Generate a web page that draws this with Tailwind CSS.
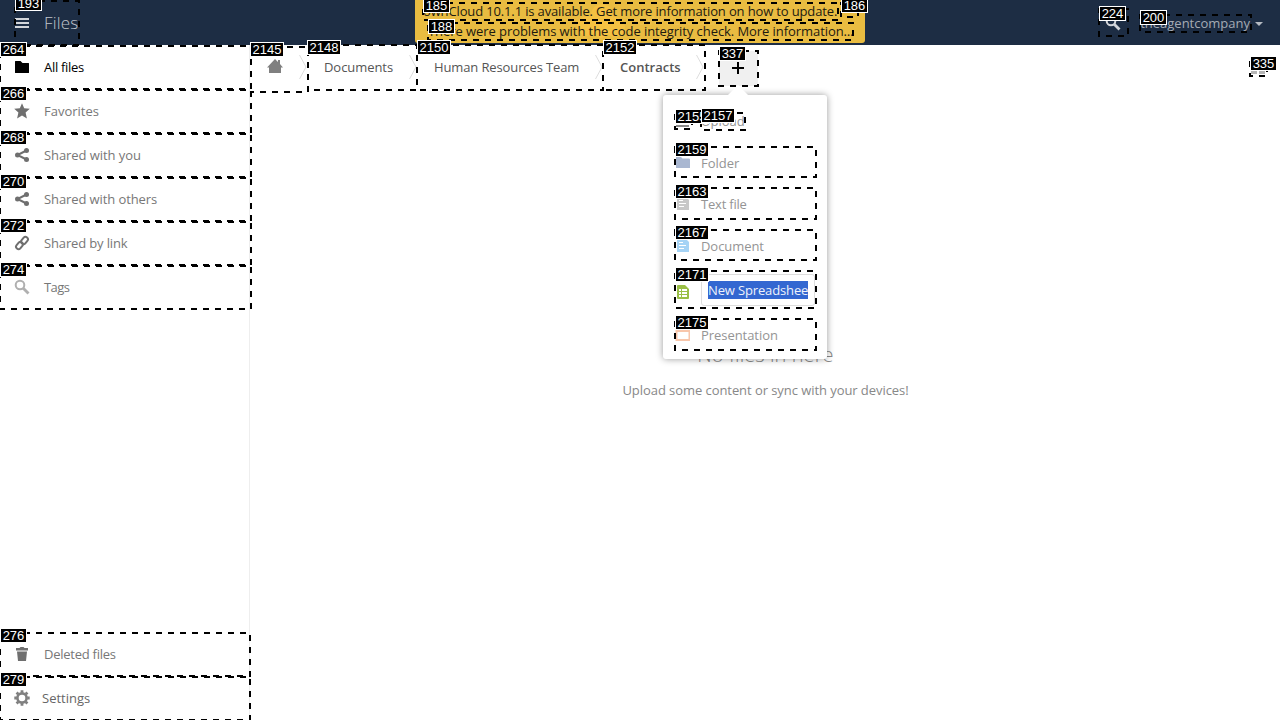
<!DOCTYPE html>
<html lang="en">
<head>
<meta charset="utf-8">
<title>Files - ownCloud</title>
<script src="https://cdn.jsdelivr.net/npm/@tailwindcss/browser@4"></script>
</head>
<body class="relative flex h-[720px] w-[1280px] flex-col overflow-hidden bg-white font-['Open_Sans',sans-serif] text-[13px] leading-[20px] text-[#555]">

<header class="flex h-[45px] shrink-0 items-center bg-[#1d2d44] text-white">
  <svg class="ml-[15px] h-[14px] w-[14px]" viewBox="0 0 14 14" fill="#d2d5da"><path d="M0 2h14v2H0zM0 6h14v2H0zM0 10h14v2H0z"/></svg>
  <span class="ml-[15px] text-[17px] font-light tracking-[.15px] text-[#c0c5cc]">Files</span>
  <svg class="ml-auto mr-[19px] h-[16px] w-[16px]" viewBox="0 0 16 16" fill="none" stroke="#d2d5da" stroke-width="2"><circle cx="6" cy="6" r="4.300"/><path d="M9 9l5.500 5.500" stroke-width="2.800"/></svg>
  <span class="text-[#a5abb4]">theagentcompany</span>
  <svg class="ml-[5px] mr-[17px] mt-[2px] h-[4px] w-[8px]" viewBox="0 0 8 4" fill="#b5bac1"><path d="M0 0h8L4 4z"/></svg>
</header>

<div class="flex min-h-0 flex-1">
  <nav class="flex w-[250px] shrink-0 flex-col border-r border-[#eee] text-[#777]">
    <a class="flex h-11 items-center gap-[14px] pl-[14px] tracking-[-.3px] text-black"><svg class="h-4 w-4" viewBox="0 0 16 16"><path d="M1.500 2h5l2 2H14.500q.5 0 .5.500v9q0 .5-.5.500h-13q-.5 0-.5-.5v-11q0-.5.5-.5z"/></svg>All files</a>
    <a class="flex h-11 items-center gap-[14px] pl-[14px]"><svg class="h-4 w-4" viewBox="0 0 16 16" fill="#6f6f6f"><path d="M8 .2l2.200 5 5.600.6-4.200 3.700 1.300 5.900L8 12.500l-4.900 2.900 1.300-5.900L.2 5.800l5.600-.6z"/></svg>Favorites</a>
    <a class="flex h-11 items-center gap-[14px] pl-[14px] tracking-[-.07px]"><svg class="h-4 w-4" viewBox="0 0 16 16" fill="#6f6f6f"><path d="M12.500 3.500L3.500 8l9 4.500" fill="none" stroke="#6f6f6f" stroke-width="2"/><circle cx="12.500" cy="3.500" r="2.500"/><circle cx="3.500" cy="8" r="2.500"/><circle cx="12.500" cy="12.500" r="2.500"/></svg>Shared with you</a>
    <a class="flex h-11 items-center gap-[14px] pl-[14px] tracking-[-.1px]"><svg class="h-4 w-4" viewBox="0 0 16 16" fill="#6f6f6f"><path d="M12.500 3.500L3.500 8l9 4.500" fill="none" stroke="#6f6f6f" stroke-width="2"/><circle cx="12.500" cy="3.500" r="2.500"/><circle cx="3.500" cy="8" r="2.500"/><circle cx="12.500" cy="12.500" r="2.500"/></svg>Shared with others</a>
    <a class="flex h-11 items-center gap-[14px] pl-[14px] tracking-[-.14px]"><svg class="h-4 w-4" viewBox="0 0 16 16" fill="none" stroke="#6f6f6f" stroke-width="2"><rect x="-4" y="-2.400" width="8" height="4.800" rx="2.400" transform="translate(10.500 5.500) rotate(-50)"/><rect x="-4" y="-2.400" width="8" height="4.800" rx="2.400" transform="translate(5.500 10.500) rotate(-50)"/></svg>Shared by link</a>
    <a class="flex h-11 items-center gap-[14px] pl-[14px] tracking-[-.6px]"><svg class="h-4 w-4" viewBox="0 0 16 16" fill="none" stroke="#b0b0b0" stroke-width="2"><circle cx="6" cy="6" r="4.300"/><path d="M9 9l5.500 5.500" stroke-width="2.800"/></svg>Tags</a>
    <a class="mt-auto flex h-11 items-center gap-[14px] pl-[14px] tracking-[-.25px]"><svg class="h-4 w-4" viewBox="0 0 16 16" fill="#6f6f6f"><path d="M6.500 1h3l1 1H14v2.500H2V2h3.500zM3 5.500h10l-1 9.500H4z"/></svg>Deleted files</a>
    <a class="flex h-11 items-center gap-[12px] pl-[14px] text-[#666]"><svg class="h-4 w-4" viewBox="0 0 16 16" fill="none" stroke="#808080"><circle cx="8" cy="8" r="4.600" stroke-width="2.600"/><path stroke-width="2.800" d="M8 .3v2.500M8 13.200v2.500M.3 8h2.500M13.200 8h2.500M2.600 2.600l1.700 1.700M11.700 11.700l1.700 1.700M13.400 2.600l-1.700 1.700M4.300 11.700l-1.700 1.700"/></svg>Settings</a>
  </nav>

  <main class="flex min-w-0 flex-1 flex-col">
    <div class="flex h-11 shrink-0 items-center">
      <svg class="ml-[17px] h-4 w-4" viewBox="0 0 16 16" fill="#808080"><path d="M8 0l3 3V1h2v4l3 3.500h-2V14H2V8.500H0z"/></svg>
      <svg class="ml-[16px] h-6 w-[8px]" viewBox="0 0 8 24" fill="none" stroke="#ddd"><path d="M.5 0l6.500 12-6.500 12"/></svg>
      <span class="ml-[17px] w-[69px] whitespace-nowrap tracking-[-.06px]">Documents</span>
      <svg class="ml-[16px] h-6 w-[8px]" viewBox="0 0 8 24" fill="none" stroke="#ddd"><path d="M.5 0l6.500 12-6.500 12"/></svg>
      <span class="ml-[17px] w-[145px] whitespace-nowrap tracking-[-.12px]">Human Resources Team</span>
      <svg class="ml-[16px] h-6 w-[8px]" viewBox="0 0 8 24" fill="none" stroke="#ddd"><path d="M.5 0l6.500 12-6.500 12"/></svg>
      <span class="ml-[17px] w-[60px] whitespace-nowrap font-semibold">Contracts</span>
      <svg class="ml-[16px] h-6 w-[8px]" viewBox="0 0 8 24" fill="none" stroke="#ddd"><path d="M.5 0l6.500 12-6.500 12"/></svg>
      <div class="ml-[15px] mt-[3px] flex h-[35px] w-[39px] items-center justify-center bg-[#f0f0f0] pb-[2px] pr-[1px]"><svg class="h-3 w-3" viewBox="0 0 12 12" stroke="#000" stroke-width="2"><path d="M6 0v12M0 6h12"/></svg></div>
      <svg class="ml-auto mr-[14px] mt-[4px] h-[14px] w-[16px]" viewBox="0 0 16 14" fill="#b5b5b5"><path d="M1 0h6v4H1zM9 0h6v4H9zM1 8h6v4H1zM9 8h6v4H9z"/></svg>
    </div>
    <div class="mt-[254px] flex flex-col items-center pl-px text-[#888]">
      <h2 class="text-[20px] font-light leading-[24px] tracking-[.08px]">No files in here</h2>
      <p class="mt-[13px] tracking-[-.065px]">Upload some content or sync with your devices!</p>
    </div>
  </main>
</div>

<div class="absolute left-[415px] top-0 flex h-[43px] w-[450px] flex-col overflow-hidden rounded-b-[3px] bg-[#e9bc41] pt-px text-[#1d1a10]">
  <svg class="absolute left-[160px] top-[4px] h-[36px] w-[54px]" viewBox="0 0 54 36" fill="#fbc343" fill-opacity=".65"><circle cx="27" cy="11" r="11"/><circle cx="12" cy="22" r="10"/><circle cx="40" cy="23" r="10"/><circle cx="26" cy="25" r="9"/></svg>
  <span class="absolute left-[222px] top-[9px] text-[16px] tracking-[.5px] text-[#edc14d]">ownCloud</span>
  <span class="relative ml-[8px] h-5 whitespace-nowrap tracking-[-.14px]">ownCloud 10.1.1 is available. Get more information on how to update.</span>
  <span class="relative ml-[13px] h-5 whitespace-nowrap tracking-[-.07px]">There were problems with the code integrity check. More information…</span>
</div>

<div class="absolute left-[663px] top-[95px] h-[264px] w-[164px] rounded-[3px] bg-white pl-[12px] text-[#949494] shadow-[0_0_7px_rgba(0,0,0,.4)]">
  <svg class="absolute left-[65px] top-[-10px] h-[10px] w-[20px]" viewBox="0 0 20 10" fill="#fff"><path d="M0 10L10 0l10 10z"/></svg>
  <div class="flex h-[47px] items-center gap-[11px] pt-[5px]"><svg class="h-[15px] w-[15px]" viewBox="0 0 15 15" fill="#888"><path d="M7.500 0l5 6h-3v4h-4V6h-3zM1 11h13v2H1z"/></svg>Upload</div>
  <div class="flex h-[41px] items-center gap-[11px]"><svg class="h-[15px] w-[15px]" viewBox="0 0 15 15" fill="#a9b7d1"><path d="M1 2h5l1.500 1.500H14q1 0 1 1V13H1z"/></svg>Folder</div>
  <div class="flex h-[41px] items-center gap-[11px] tracking-[-.2px]"><svg class="h-[15px] w-[15px]" viewBox="0 0 15 15"><path d="M2 1h9l3 3v10H2z" fill="#c8c8c8"/><path d="M4 4.500h4M4 7.500h7M4 10.500h5" stroke="#fff"/></svg>Text file</div>
  <div class="flex h-[43px] items-center gap-[11px] tracking-[-.06px]"><svg class="h-[15px] w-[15px]" viewBox="0 0 15 15"><path d="M2 1h9l3 3v10H2z" fill="#a5d3f5"/><path d="M4 4.500h4M4 7.500h7M4 10.500h5" stroke="#fff"/></svg>Document</div>
  <div class="flex h-[45px] items-center gap-[11px]"><svg class="mt-[5px] h-[15px] w-[15px] shrink-0" viewBox="0 0 15 15"><path d="M2 1q0-1 1-1h7l4 4v9q0 1-1 1H3q-1 0-1-1z" fill="#9abf46"/><path d="M4 4h8v8H4z" fill="#fff"/><path d="M4 6.500h8M4 9.500h8M6.500 4v8" stroke="#9abf46"/></svg><div class="flex h-[32px] w-[114px] items-center rounded-[3px] border border-[#ddd] pl-[6px] pt-px"><span class="h-[18px] w-[100px] overflow-hidden whitespace-nowrap bg-[#3367d1] leading-[18px] tracking-[-.14px] text-[#eef2fb]">New Spreadshee</span></div></div>
  <div class="flex h-[46px] items-center gap-[11px] tracking-[-.05px]"><svg class="h-[15px] w-[15px]" viewBox="0 0 15 15"><path d="M1.500 3h13v9h-13z" fill="none" stroke="#f8c6ab" stroke-width="2"/></svg>Presentation</div>
</div>

<!-- numbered element outlines -->
<svg class="absolute left-0 top-0 h-[720px] w-[1280px]" viewBox="0 0 1280 720" fill="none" stroke="#000" stroke-width="2" stroke-dasharray="6 6">
  <rect x="15" y="1" width="64" height="44"/>
  <rect x="0" y="46" width="251" height="43"/>
  <rect x="0" y="90" width="251" height="43"/>
  <rect x="0" y="134" width="251" height="43"/>
  <rect x="0" y="178" width="251" height="43"/>
  <rect x="0" y="222" width="251" height="43"/>
  <rect x="0" y="266" width="251" height="43"/>
  <rect x="0" y="633" width="250" height="43"/>
  <rect x="0" y="677" width="250" height="43"/>
  <rect x="423" y="3" width="415" height="17"/>
  <rect x="841" y="3" width="17" height="14"/>
  <rect x="428" y="23" width="425" height="17"/>
  <path d="M251 47h57v45h-57"/>
  <path d="M307 45h110v45H307"/>
  <path d="M417 45h186v45H417"/>
  <path d="M603 45h102v45H603"/>
  <rect x="719" y="51" width="39" height="35"/>
  <rect x="1099" y="9" width="29" height="27"/>
  <rect x="1140" y="15" width="111" height="17"/>
  <rect x="1250" y="59" width="17" height="17"/>
  <rect x="675" y="112" width="17" height="17"/>
  <rect x="701" y="113" width="44" height="17"/>
  <rect x="675" y="147" width="141" height="30"/>
  <rect x="675" y="188" width="141" height="31"/>
  <rect x="675" y="230" width="141" height="30"/>
  <rect x="675" y="271" width="141" height="37"/>
  <rect x="675" y="319" width="141" height="31"/>
</svg>

<!-- outline labels -->
<div class="font-['Liberation_Sans',sans-serif] text-[13px] leading-[13px] text-white">
  <b class="absolute left-[15px] top-[-4px] h-[15px] w-[27px] border border-white bg-black text-center font-normal">193</b>
  <b class="absolute left-0 top-[42px] h-[15px] w-[27px] border border-white bg-black text-center font-normal">264</b>
  <b class="absolute left-0 top-[86px] h-[15px] w-[27px] border border-white bg-black text-center font-normal">266</b>
  <b class="absolute left-0 top-[130px] h-[15px] w-[27px] border border-white bg-black text-center font-normal">268</b>
  <b class="absolute left-0 top-[174px] h-[15px] w-[27px] border border-white bg-black text-center font-normal">270</b>
  <b class="absolute left-0 top-[218px] h-[15px] w-[27px] border border-white bg-black text-center font-normal">272</b>
  <b class="absolute left-0 top-[262px] h-[15px] w-[27px] border border-white bg-black text-center font-normal">274</b>
  <b class="absolute left-0 top-[628px] h-[15px] w-[27px] border border-white bg-black text-center font-normal">276</b>
  <b class="absolute left-0 top-[672px] h-[15px] w-[27px] border border-white bg-black text-center font-normal">279</b>
  <b class="absolute left-[423px] top-[-2px] h-[15px] w-[27px] border border-white bg-black text-center font-normal">185</b>
  <b class="absolute left-[841px] top-[-2px] h-[15px] w-[27px] border border-white bg-black text-center font-normal">186</b>
  <b class="absolute left-[428px] top-[19px] h-[15px] w-[27px] border border-white bg-black text-center font-normal">188</b>
  <b class="absolute left-[250px] top-[42px] h-[15px] w-[34px] border border-white bg-black text-center font-normal">2145</b>
  <b class="absolute left-[307px] top-[40px] h-[15px] w-[34px] border border-white bg-black text-center font-normal">2148</b>
  <b class="absolute left-[417px] top-[40px] h-[15px] w-[34px] border border-white bg-black text-center font-normal">2150</b>
  <b class="absolute left-[603px] top-[40px] h-[15px] w-[34px] border border-white bg-black text-center font-normal">2152</b>
  <b class="absolute left-[719px] top-[46px] h-[15px] w-[27px] border border-white bg-black text-center font-normal">337</b>
  <b class="absolute left-[1099px] top-[6px] h-[15px] w-[27px] border border-white bg-black text-center font-normal">224</b>
  <b class="absolute left-[1140px] top-[10px] h-[15px] w-[27px] border border-white bg-black text-center font-normal">200</b>
  <b class="absolute left-[1250px] top-[56px] h-[15px] w-[27px] border border-white bg-black text-center font-normal">335</b>
  <b class="absolute left-[675px] top-[109px] h-[15px] w-[34px] border border-white bg-black text-center font-normal">2155</b>
  <b class="absolute left-[701px] top-[108px] h-[15px] w-[34px] border border-white bg-black text-center font-normal">2157</b>
  <b class="absolute left-[675px] top-[142px] h-[15px] w-[34px] border border-white bg-black text-center font-normal">2159</b>
  <b class="absolute left-[675px] top-[184px] h-[15px] w-[34px] border border-white bg-black text-center font-normal">2163</b>
  <b class="absolute left-[675px] top-[225px] h-[15px] w-[34px] border border-white bg-black text-center font-normal">2167</b>
  <b class="absolute left-[675px] top-[267px] h-[15px] w-[34px] border border-white bg-black text-center font-normal">2171</b>
  <b class="absolute left-[675px] top-[315px] h-[15px] w-[34px] border border-white bg-black text-center font-normal">2175</b>
</div>
</body>
</html>
